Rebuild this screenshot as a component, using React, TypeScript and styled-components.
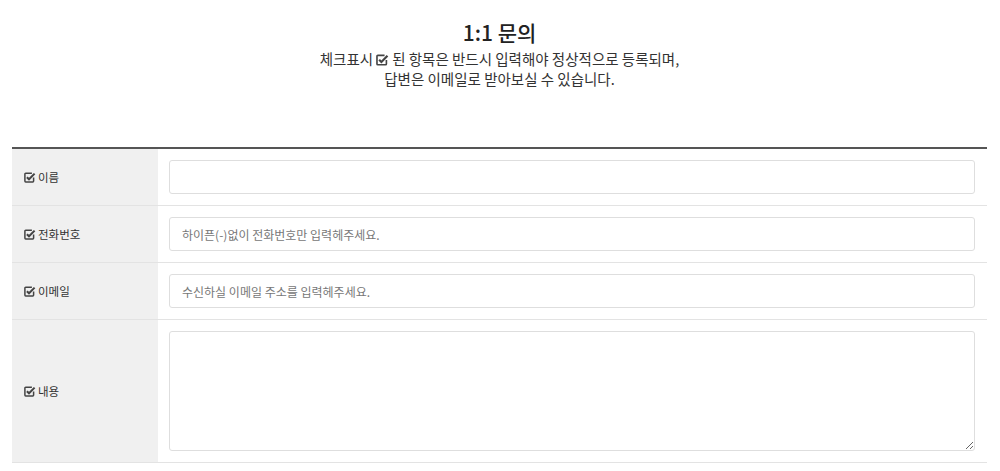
import React from 'react'
import styled, { createGlobalStyle } from 'styled-components'

const GlobalStyle = createGlobalStyle`
  html, body {
    margin: 0;
    padding: 0;
    background: #ffffff;
    font-family: "Noto Sans CJK KR", "Noto Sans", sans-serif;
    color: #333333;
  }
  * { box-sizing: border-box; }
`

const Page = styled.div`
  padding: 0 13px 0 12px;
`

const Header = styled.div`
  display: flex;
  flex-direction: column;
  align-items: center;
  padding-top: 17px;
  margin-bottom: 58px;
`

const Title = styled.h2`
  margin: 0;
  font-size: 21px;
  font-weight: 500;
  line-height: 30px;
  color: #222222;
`

const Notice = styled.p`
  margin: 2px 0 0;
  font-size: 14.5px;
  line-height: 20px;
  text-align: center;
  color: #333333;
`

const FormTable = styled.div`
  border-top: 2px solid #555555;
`

const Row = styled.div<{ $tall?: boolean }>`
  display: grid;
  grid-template-columns: 146px 1fr;
  border-bottom: 1px solid #e3e3e3;
  min-height: ${(p) => (p.$tall ? '142px' : '56px')};
`

const Label = styled.div`
  display: flex;
  align-items: center;
  gap: 2px;
  padding-left: 12px;
  background: #f0f0f0;
  font-size: 11.5px;
  color: #333333;
`

const Field = styled.div`
  padding: 11px 12px 11px 11px;
`

const TextInput = styled.input`
  display: block;
  width: 100%;
  height: 34px;
  padding: 0 12px;
  border: 1px solid #dedede;
  border-radius: 3px;
  font-family: inherit;
  font-size: 12px;
  color: #333333;
  outline: none;
  &::placeholder {
    color: #777777;
  }
`

const TextArea = styled.textarea`
  display: block;
  width: 100%;
  height: 120px;
  padding: 8px 12px;
  border: 1px solid #dedede;
  border-radius: 3px;
  font-family: inherit;
  font-size: 12px;
  outline: none;
`

const CheckIcon = styled.svg`
  width: 12px;
  height: 11px;
  flex-shrink: 0;
`

const InlineCheck = styled(CheckIcon)`
  width: 13px;
  height: 12px;
  margin: 0 3px -1px 3px;
`

const CheckMark = (props: React.SVGProps<SVGSVGElement>) => (
  <svg viewBox="0 0 12 11" {...props}>
    <path
      d="M9.6 5.6V9.1a0.8 0.8 0 0 1-0.8 0.8H1.7a0.8 0.8 0 0 1-0.8-0.8V2a0.8 0.8 0 0 1 0.8-0.8h6.2"
      fill="none"
      stroke="#444"
      strokeWidth="1.5"
    />
    <path d="M2.9 5.2 5 7.3 10.6 1.6" fill="none" stroke="#444" strokeWidth="2" />
  </svg>
)

type FieldDef = {
  label: string
  placeholder?: string
  multiline?: boolean
}

const fields: FieldDef[] = [
  { label: '이름' },
  { label: '전화번호', placeholder: '하이픈(-)없이 전화번호만 입력헤주세요.' },
  { label: '이메일', placeholder: '수신하실 이메일 주소를 입력헤주세요.' },
  { label: '내용', multiline: true },
]

export default function App() {
  return (
    <Page>
      <GlobalStyle />
      <Header>
        <Title>1:1 문의</Title>
        <Notice>
          체크표시
          <InlineCheck as={CheckMark} />
          된 항목은 반드시 입력해야 정상적으로 등록되며,
          <br />
          답변은 이메일로 받아보실 수 있습니다.
        </Notice>
      </Header>
      <FormTable>
        {fields.map((f) => (
          <Row key={f.label} $tall={f.multiline}>
            <Label>
              <CheckIcon as={CheckMark} />
              {f.label}
            </Label>
            <Field>
              {f.multiline ? (
                <TextArea />
              ) : (
                <TextInput placeholder={f.placeholder} />
              )}
            </Field>
          </Row>
        ))}
      </FormTable>
    </Page>
  )
}
